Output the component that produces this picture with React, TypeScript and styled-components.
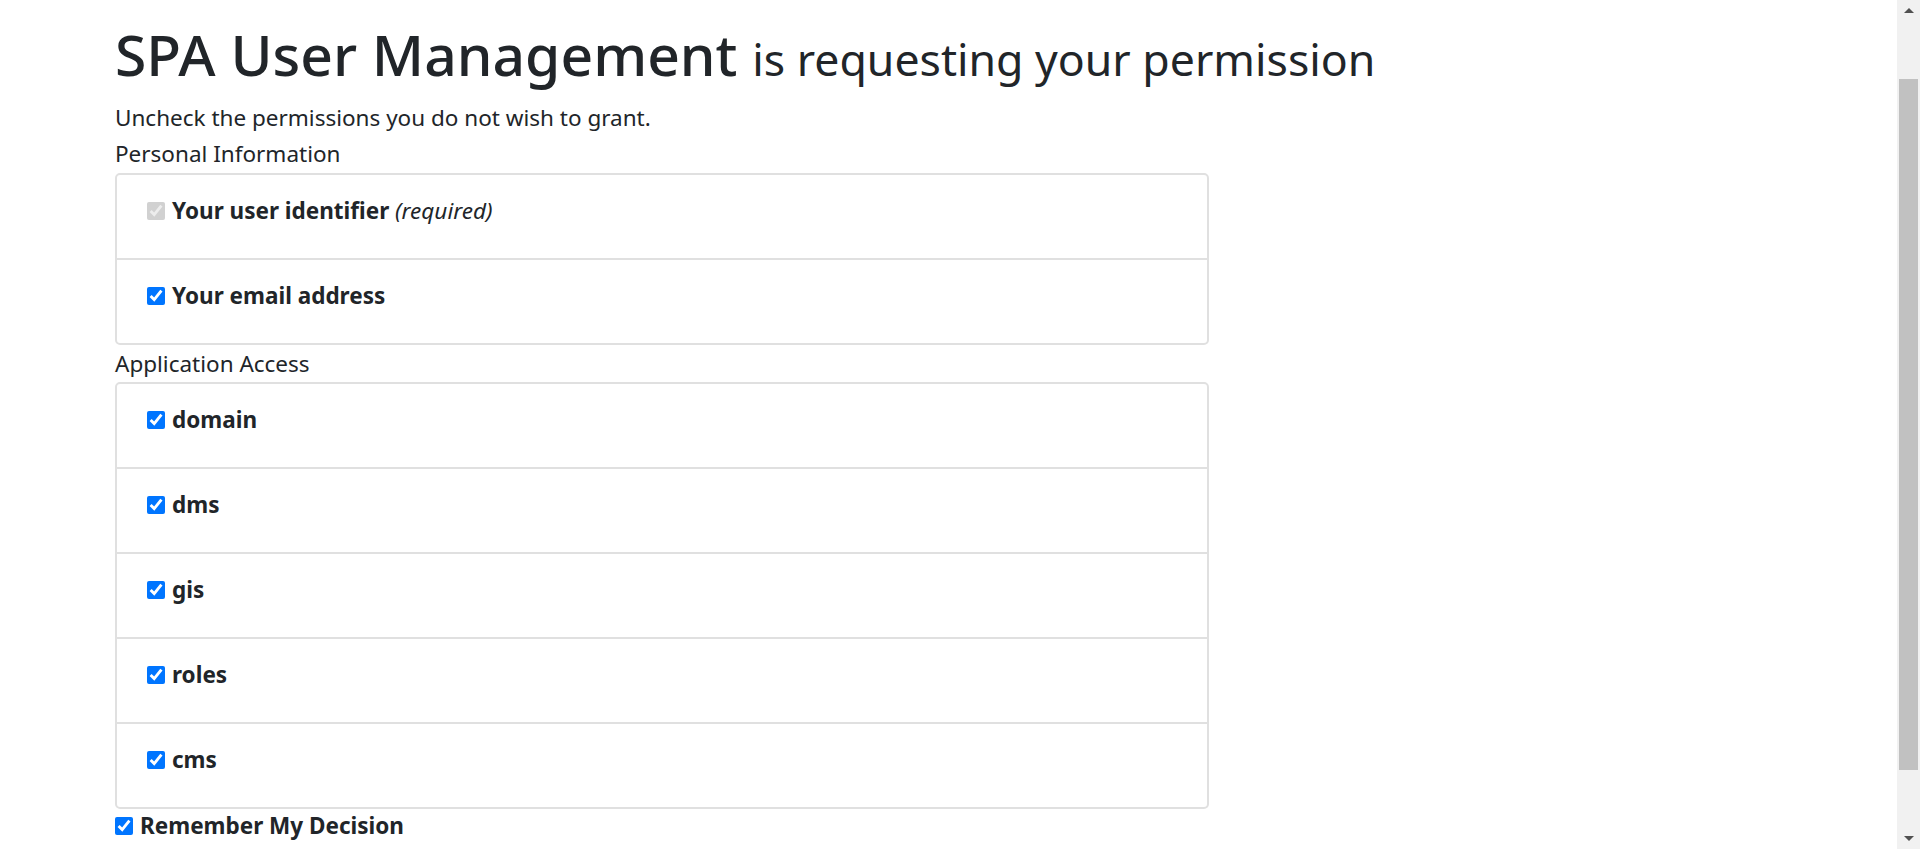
import React from "react";
import styled, { createGlobalStyle } from "styled-components";

const Global = createGlobalStyle`
  html, body { margin: 0; padding: 0; background: #fff; }
  body {
    font-family: "Noto Sans", "Open Sans", sans-serif;
    color: #212529;
    font-size: 22.5px;
    line-height: 34px;
  }
`;

const Page = styled.div`
  padding: 20px 0 160px 115px;
`;

const Title = styled.h1`
  margin: 0;
  font-size: 57px;
  font-weight: 500;
  line-height: 68px;
  white-space: nowrap;
`;

const Small = styled.small`
  font-size: 44.6px;
  font-weight: 400;
  line-height: 1;
`;

const Form = styled.form`
  width: 1094px;
  margin-top: 13px;
`;

const Lead = styled.div``;

const SectionLabel = styled.div<{ $gap?: number }>`
  margin-top: ${(p) => p.$gap ?? 2}px;
`;

const Card = styled.ul<{ $gap?: number }>`
  list-style: none;
  margin: ${(p) => p.$gap ?? 2}px 0 0;
  padding: 0;
  border: 2px solid #e0e0e0;
  border-radius: 5px;
`;

const Item = styled.li`
  padding: 19px 30px 30px;
  & + & { border-top: 2px solid #e0e0e0; }
`;

const Label = styled.label`
  display: flex;
  align-items: center;
  gap: 7px;
  font-weight: 700;
`;

const Check = styled.input`
  width: 18px;
  height: 18px;
  margin: 0;
  flex: none;
  accent-color: #0075ff;
`;

const Req = styled.em`
  font-weight: 400;
`;

const Scrollbar = styled.div`
  position: fixed;
  top: 0;
  right: 0;
  bottom: 0;
  width: 23px;
  background: #f1f1f1;
  display: flex;
  flex-direction: column;
  align-items: center;
`;

const Arrow = styled.div<{ $down?: boolean }>`
  height: 21px;
  width: 100%;
  display: flex;
  align-items: center;
  justify-content: center;
  flex: none;
  &::before {
    content: "";
    border-left: 5px solid transparent;
    border-right: 5px solid transparent;
    ${(p) =>
      p.$down ? "border-top: 5px solid #505050;" : "border-bottom: 5px solid #505050;"}
  }
`;

const Track = styled.div`
  flex: 1;
  width: 100%;
  display: flex;
  justify-content: center;
`;

const Thumb = styled.div`
  width: 19px;
  height: 691px;
  margin-top: 58px;
  background: #c1c1c1;
`;

export default function App() {
  const apps = ["domain", "dms", "gis", "roles", "cms"];
  return (
    <>
      <Global />
      <Page>
        <Title>
          SPA User Management <Small>is requesting your permission</Small>
        </Title>
        <Form>
          <Lead>Uncheck the permissions you do not wish to grant.</Lead>
          <SectionLabel>Personal Information</SectionLabel>
          <Card>
            <Item>
              <Label>
                <Check type="checkbox" checked disabled readOnly />
                <span>
                  Your user identifier <Req>(required)</Req>
                </span>
              </Label>
            </Item>
            <Item>
              <Label>
                <Check type="checkbox" defaultChecked />
                Your email address
              </Label>
            </Item>
          </Card>
          <SectionLabel>Application Access</SectionLabel>
          <Card $gap={1}>
            {apps.map((a) => (
              <Item key={a}>
                <Label>
                  <Check type="checkbox" defaultChecked />
                  {a}
                </Label>
              </Item>
            ))}
          </Card>
          <Label>
            <Check type="checkbox" defaultChecked />
            Remember My Decision
          </Label>
        </Form>
      </Page>
      <Scrollbar>
        <Arrow />
        <Track>
          <Thumb />
        </Track>
        <Arrow $down />
      </Scrollbar>
    </>
  );
}
